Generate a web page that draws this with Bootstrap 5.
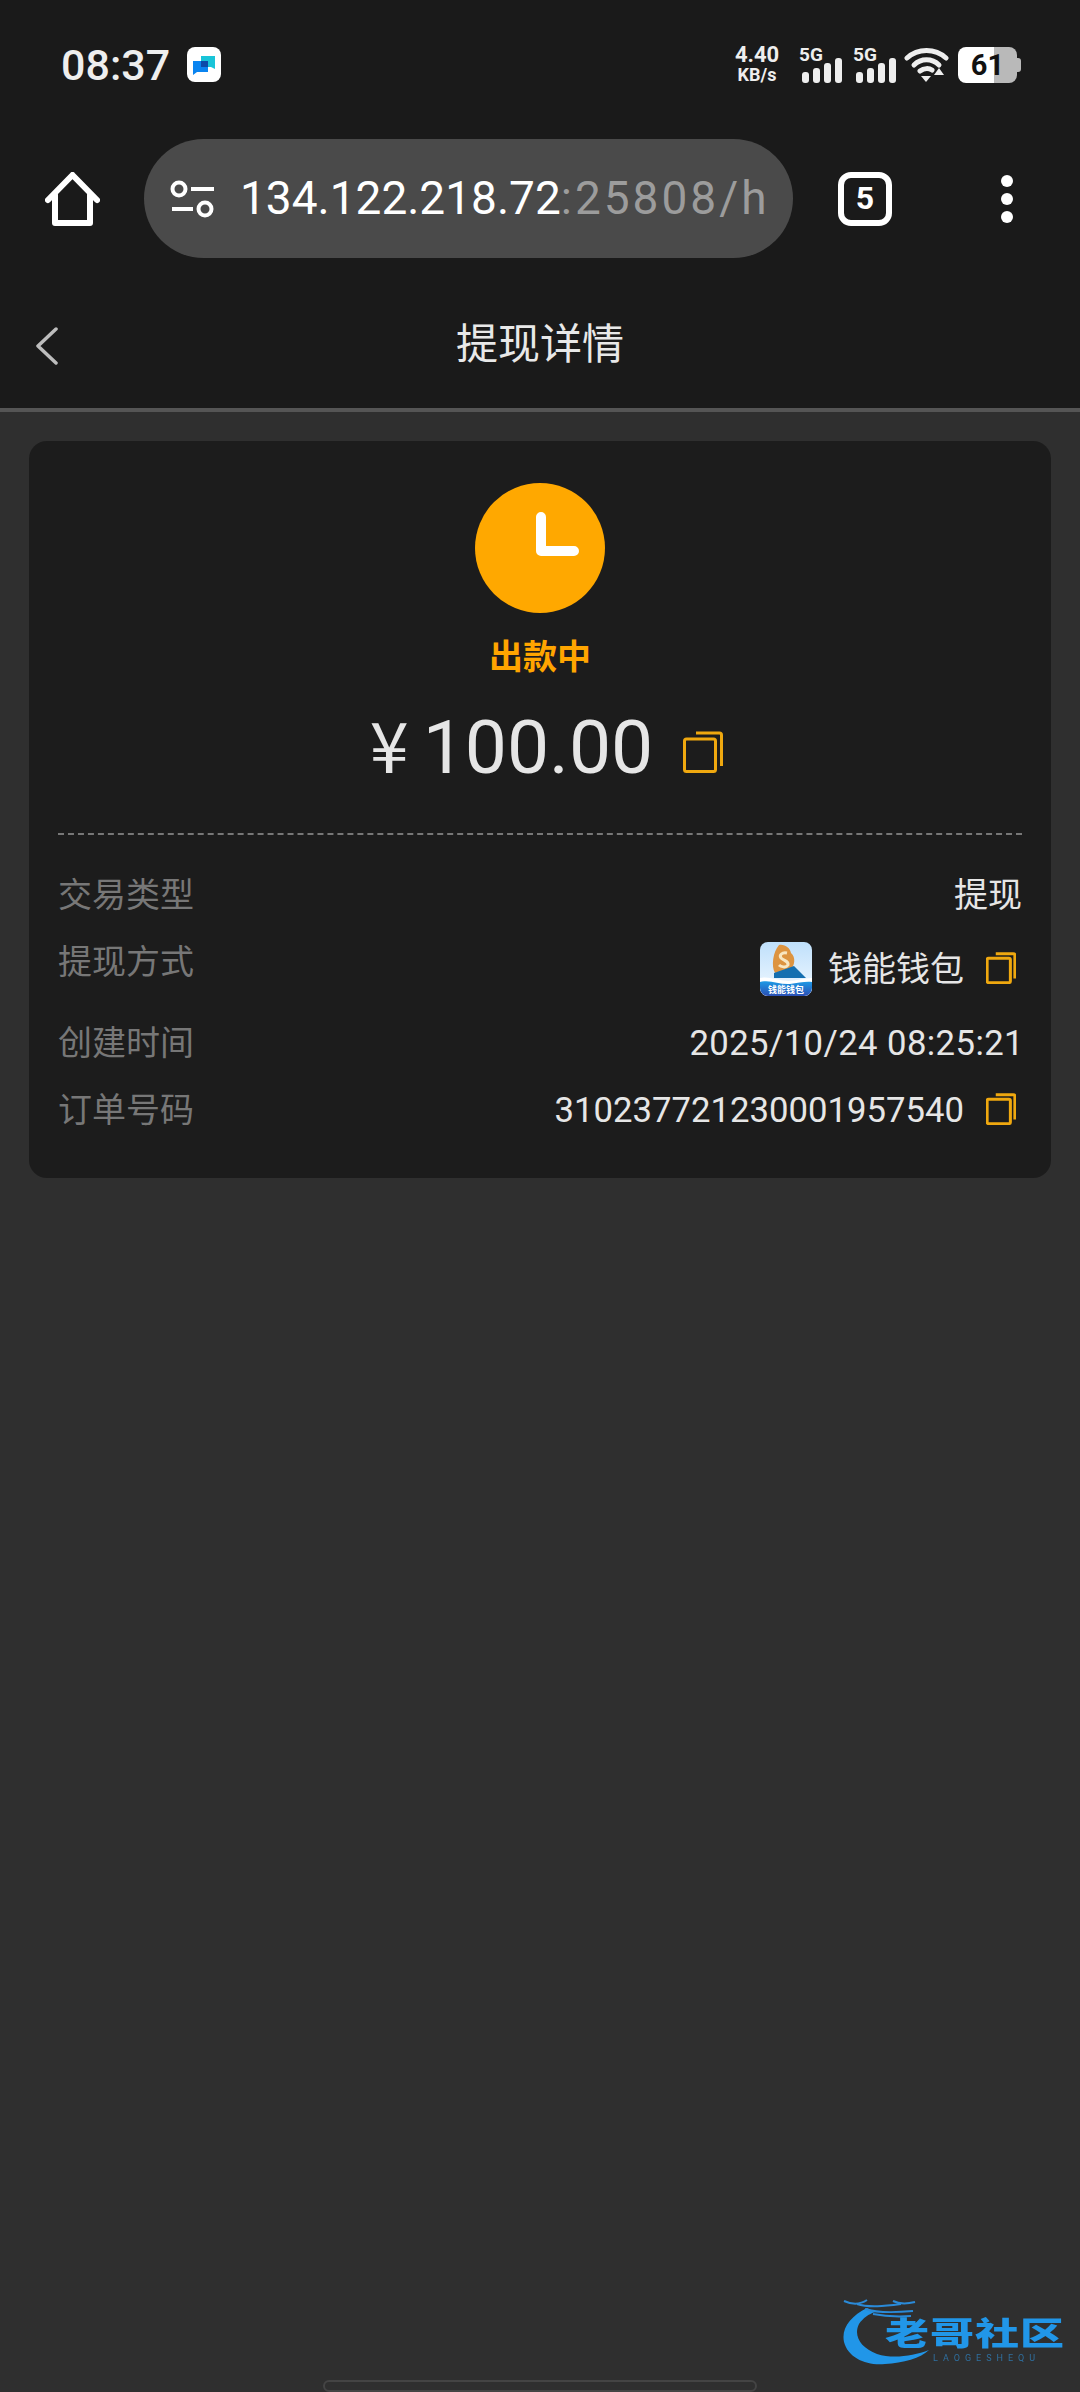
<!DOCTYPE html>
<html lang="zh">
  <head>
    <meta charset="UTF-8">
    <title>提现详情</title>
    <meta name="viewport" content="width=device-width, initial-scale=1">
    <link href="https://cdn.jsdelivr.net/npm/bootstrap@5.3.0/dist/css/bootstrap.min.css" rel="stylesheet">
    <style>
      html, body { height: 2392px; overflow: hidden; }
      body { background: #2f2f2f; font-family: Roboto, "Noto Sans CJK SC", sans-serif; color: #e6e6e6; position: relative; }
      .top-dark { background: #1a1a1a; }

      .status-row { height: 139px; padding: 47px 63px 0 61px; align-items: flex-start; }
      .clock-text { font-size: 43px; line-height: 36px; font-weight: 500; color: #eee; }
      .notif-ico { width: 34px; height: 35px; background: #fff; border-radius: 8px; margin-left: 17px; }
      .speed-text { width: 52px; margin-top: -3px; font-size: 22px; line-height: 22px; font-weight: 700; text-align: center; color: #eee; white-space: nowrap; }
      .speed-text span { font-size: 18px; line-height: 18px; display: block; }
      .sim-box { width: 43px; height: 36px; margin-left: 11px; position: relative; }
      .sim-box b { position: absolute; left: 0; top: -2px; font-size: 19px; line-height: 20px; color: #eee; }
      .sim-box svg { position: absolute; left: 3px; top: 11px; }
      .batt-box { width: 59px; height: 36px; margin-left: 9px; border-radius: 8px; background: linear-gradient(90deg, #fff 61%, #b9b9b9 61%); color: #111; font-size: 29px; line-height: 36px; font-weight: 700; text-align: center; position: relative; }
      .batt-box::after { content: ""; position: absolute; right: -4px; top: 11px; width: 4px; height: 14px; background: #b9b9b9; border-radius: 0 3px 3px 0; }

      .tool-row { height: 119px; }
      .url-pill { width: 649px; height: 119px; margin-left: 44px; background: #4a4a4a; border-radius: 60px; padding-left: 26px; padding-right: 16px; overflow: hidden; }
      .url-text { font-size: 46px; line-height: 119px; white-space: nowrap; color: #fff; margin-left: 26px; }
      .url-text span { color: #9c9c9c; letter-spacing: 3px; }
      .tab-count { width: 54px; height: 54px; margin-left: 45px; border: 6px solid #fff; border-radius: 13px; color: #fff; font-size: 32px; line-height: 40px; font-weight: 700; text-align: center; }
      .menu-dots { margin-left: 108px; }

      .page-head { height: 154px; padding-top: 24px; border-bottom: 4px solid #555; position: relative; }
      .page-title { font-size: 42px; line-height: 56px; color: #e8e8e8; }
      .back-btn { position: absolute; left: 35px; top: 69px; }

      .detail-box { margin: 29px 29px 0; background: #1c1c1c; border-radius: 18px; padding: 42px 29px 43px; }
      .state-ring { width: 130px; height: 130px; }
      .state-text { font-size: 34px; line-height: 46px; font-weight: 700; color: #ffa500; margin-top: 21px; }
      .amount-line { margin-top: 20px; margin-left: 13px; height: 90px; }
      .amount-text { font-size: 75px; line-height: 90px; color: #e6e6e6; }
      .amount-text .yen { margin-right: 14px; font-family: "Noto Sans CJK SC", sans-serif; font-size: 70px; }
      .amount-copy { margin-left: 30px; margin-top: 14px; color: #efa80f; }
      .dash-rule { margin-top: 43px; border-top: 2px dashed #777; }
      .info-rows { margin-top: 35px; gap: 17px; }
      .info-rows > div { font-size: 34px; line-height: 50px; }
      .info-key { color: #777; }
      .info-val { color: #e6e6e6; }
      .num-val { font-size: 34.7px; }
      .date-val { letter-spacing: .4px; margin-right: -2px; }
      .wallet-row { min-height: 64px; }
      .wallet-ico { margin-right: 16px; }
      .copy-sm { margin-left: 22px; margin-right: 6px; margin-top: -3px; color: #efa80f; }

      .water-mark { position: absolute; left: 843px; top: 2296px; width: 222px; height: 72px; filter: blur(.6px); }
      .water-mark .wm-cn { position: absolute; left: 42px; top: 22px; font-size: 44px; line-height: 32px; height: 32px; font-weight: 900; color: #2196e8; letter-spacing: 1px; white-space: nowrap; transform: scaleY(.72); }
      .water-mark .wm-en { position: absolute; left: 90px; top: 56px; font-size: 9px; line-height: 12px; color: #2f6f9f; letter-spacing: 5px; white-space: nowrap; }
      .home-bar { position: absolute; left: 323px; top: 2380px; width: 434px; height: 12px; border: 2px solid #444; border-radius: 6px; }
    </style>
  </head>
  <body>
    <svg width="0" height="0" class="position-absolute">
      <symbol id="copyIco" viewBox="0 0 40 42">
        <rect x="1.500" y="8" width="31" height="32.500" rx="2" fill="none" stroke="currentColor" stroke-width="3" vector-effect="non-scaling-stroke"/>
        <path d="M13 2H36.500A2 2 0 0 1 38.500 4V35" fill="none" stroke="currentColor" stroke-width="3" vector-effect="non-scaling-stroke"/>
      </symbol>
    </svg>

    <div class="top-dark">
      <div class="d-flex status-row">
        <div class="clock-text">08:37</div>
        <div class="notif-ico d-flex align-items-center justify-content-center">
          <svg width="26" height="22" viewBox="0 0 26 22">
            <path d="M10 2H24V15L20 13H10Z" fill="#19c4d8"/>
            <path d="M2 7H17V18H6L2 21Z" fill="#0a84f0"/>
            <rect x="10" y="7" width="7" height="6" fill="#0c4aa8"/>
          </svg>
        </div>
        <div class="flex-grow-1"></div>
        <div class="speed-text">4.40<span>KB/s</span></div>
        <div class="sim-box ms-3">
          <b>5G</b>
          <svg width="40" height="25" viewBox="0 0 40 25" fill="#eee">
            <rect x="0" y="14" width="7" height="11" rx="3"/><rect x="11" y="10" width="7" height="15" rx="3"/><rect x="22" y="5" width="7" height="20" rx="3"/><rect x="33" y="0" width="7" height="25" rx="3"/>
          </svg>
        </div>
        <div class="sim-box">
          <b>5G</b>
          <svg width="40" height="25" viewBox="0 0 40 25" fill="#eee">
            <rect x="0" y="14" width="7" height="11" rx="3"/><rect x="11" y="10" width="7" height="15" rx="3"/><rect x="22" y="5" width="7" height="20" rx="3"/><rect x="33" y="0" width="7" height="25" rx="3"/>
          </svg>
        </div>
        <svg class="ms-2" width="45" height="36" viewBox="0 0 45 36" fill="none" stroke="#eee" stroke-width="5" stroke-linecap="round">
          <path d="M3 11C14 1 31 1 42 11"/>
          <path d="M10 18C17 11 28 11 35 18"/>
          <path d="M16 24C20 21 25 21 28 23"/>
          <path d="M17 29H27L22 35Z" fill="#eee" stroke="none"/>
          <path d="M35 21L40 28H30Z" fill="#eee" stroke="none"/>
        </svg>
        <div class="batt-box">61</div>
      </div>

      <div class="d-flex align-items-center tool-row">
        <svg style="margin-left:45px" width="55" height="54" viewBox="0 0 55 54" fill="none" stroke="#fff" stroke-width="6" stroke-linecap="round" stroke-linejoin="round">
          <path d="M3 28L27.500 3L52 28"/>
          <path d="M10 23V51H45V23"/>
        </svg>
        <div class="url-pill d-flex align-items-center">
          <svg class="flex-shrink-0" width="44" height="38" viewBox="0 0 44 38" fill="none" stroke="#fff" stroke-width="4">
            <circle cx="9" cy="9" r="6.500"/><path d="M21 9H44"/>
            <circle cx="35" cy="29" r="6.500"/><path d="M2 29H23"/>
          </svg>
          <div class="url-text">134.122.218.72<span>:25808/h</span></div>
        </div>
        <div class="tab-count">5</div>
        <svg class="menu-dots" width="14" height="48" viewBox="0 0 14 48" fill="#fff">
          <circle cx="7" cy="6" r="6"/><circle cx="7" cy="24" r="6"/><circle cx="7" cy="42" r="6"/>
        </svg>
      </div>

      <div class="page-head d-flex align-items-center justify-content-center">
        <svg class="back-btn" width="24" height="38" viewBox="0 0 24 38" fill="none" stroke="#bdbdbd" stroke-width="3.500" stroke-linecap="round" stroke-linejoin="round">
          <path d="M21 2L3 19L21 36"/>
        </svg>
        <div class="page-title">提现详情</div>
      </div>
    </div>

    <div class="detail-box">
      <div class="d-flex flex-column align-items-center">
        <svg class="state-ring" viewBox="0 0 130 130">
          <circle cx="65" cy="65" r="65" fill="#ffa800"/>
          <path d="M66 34V68H99" fill="none" stroke="#fff" stroke-width="10" stroke-linecap="round" stroke-linejoin="round"/>
        </svg>
        <div class="state-text">出款中</div>
        <div class="d-flex align-items-center amount-line">
          <div class="amount-text"><span class="yen">¥</span>100.00</div>
          <svg class="amount-copy" width="40" height="42"><use href="#copyIco"/></svg>
        </div>
      </div>
      <div class="dash-rule"></div>
      <div class="d-flex flex-column info-rows">
        <div class="d-flex justify-content-between">
          <div class="info-key">交易类型</div>
          <div class="info-val">提现</div>
        </div>
        <div class="d-flex justify-content-between wallet-row">
          <div class="info-key">提现方式</div>
          <div class="info-val d-flex align-items-center">
            <svg class="wallet-ico" width="52" height="54" viewBox="0 0 52 54">
              <defs>
                <clipPath id="appClip"><rect width="52" height="54" rx="8"/></clipPath>
                <linearGradient id="appSky" x1="0" y1="0" x2="0" y2="1"><stop offset="0" stop-color="#bfe0fb"/><stop offset="1" stop-color="#f2f9ff"/></linearGradient>
                <linearGradient id="appSea" x1="0" y1="0" x2="0" y2="1"><stop offset="0" stop-color="#1d9be6"/><stop offset="1" stop-color="#2b4fb5"/></linearGradient>
              </defs>
              <g clip-path="url(#appClip)">
                <rect width="52" height="54" fill="url(#appSky)"/>
                <path d="M19 3C25 2 30 6 31 11C36 15 35 24 30 28L15 31C11 24 13 10 19 3Z" fill="#dd9440"/>
                <path d="M27 11C22 10 19 13 21 16C24 19 29 19 28 23C26 26 21 25 19 23" fill="none" stroke="#f8e6c0" stroke-width="3"/>
                <path d="M14 31L34 24L46 36L14 36Z" fill="#146fb0"/>
                <path d="M0 36C8 34 18 38 28 39C36 39 44 36 52 36V54H0Z" fill="#fff"/>
                <path d="M0 40C10 37 20 43 30 42C38 41 46 39 52 40V54H0Z" fill="url(#appSea)"/>
                <text x="26" y="51" font-size="9" font-weight="700" fill="#fff" text-anchor="middle">钱能钱包</text>
              </g>
            </svg>
            钱能钱包
            <svg class="copy-sm" width="30" height="32"><use href="#copyIco"/></svg>
          </div>
        </div>
        <div class="d-flex justify-content-between">
          <div class="info-key">创建时间</div>
          <div class="info-val num-val date-val">2025/10/24 08:25:21</div>
        </div>
        <div class="d-flex justify-content-between">
          <div class="info-key">订单号码</div>
          <div class="info-val num-val d-flex align-items-center">
            310237721230001957540
            <svg class="copy-sm" width="30" height="32"><use href="#copyIco"/></svg>
          </div>
        </div>
      </div>
    </div>

    <div class="water-mark">
      <svg class="position-absolute top-0 start-0" width="90" height="72" viewBox="0 0 90 72">
        <path d="M24 12C8 20 -2 32 1 46C5 62 24 70 42 68C60 67 78 62 86 54C70 60 50 63 34 58C18 52 10 40 16 28C20 22 26 18 32 16Z" fill="#2196e8"/>
        <g fill="none" stroke="#2a8ad8" stroke-width="2">
          <path d="M1 5C10 9 18 8 24 4"/>
          <path d="M14 8C26 12 42 10 58 8"/>
          <path d="M22 13C34 17 48 17 70 15"/>
          <path d="M30 18C40 20 52 21 68 20"/>
          <path d="M50 5C56 8 64 8 72 6"/>
        </g>
      </svg>
      <div class="wm-cn">老哥社区</div>
      <div class="wm-en">LAOGESHEQU</div>
    </div>
    <div class="home-bar"></div>

    <script src="https://cdn.jsdelivr.net/npm/bootstrap@5.3.0/dist/js/bootstrap.bundle.min.js"></script>
  </body>
</html>
